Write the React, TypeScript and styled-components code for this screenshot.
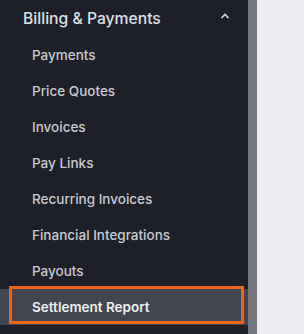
import React, { FC } from "react";
import styled, { createGlobalStyle } from "styled-components";

const GlobalStyle = createGlobalStyle`
  html, body {
    margin: 0;
    padding: 0;
    background: #eceef2;
  }
  body {
    font-family: Inter, "Liberation Sans", sans-serif;
  }
`;

const Page = styled.div`
  display: flex;
  width: 304px;
  height: 334px;
  overflow: hidden;
`;

const Sidebar = styled.nav`
  width: 248px;
  background: #1e2029;
  display: flex;
  flex-direction: column;
`;

const Divider = styled.div`
  width: 9px;
  background: #74767b;
`;

const Content = styled.div`
  flex: 1;
  background: #eceef2;
`;

const SectionHeader = styled.div`
  height: 37px;
  display: flex;
  align-items: center;
  justify-content: space-between;
  padding: 0 18px 0 23px;
  color: #dde0e6;
  font-size: 15.7px;
  font-weight: 500;
`;

const Chevron = styled.svg`
  width: 10px;
  height: 10px;
  margin-top: -6px;
`;

const ItemList = styled.ul`
  list-style: none;
  margin: 0;
  padding: 0;
`;

const Item = styled.li<{ active?: boolean }>`
  position: relative;
  height: 36px;
  display: flex;
  align-items: center;
  padding-left: 32px;
  font-size: 13.5px;
  font-weight: ${({ active }) => (active ? 600 : 500)};
  color: ${({ active }) => (active ? "#eef0f3" : "#c8cad0")};
  background: ${({ active }) => (active ? "#43464e" : "transparent")};
`;

const Outline = styled.span`
  position: absolute;
  left: 9px;
  right: 4px;
  top: -3px;
  bottom: 1px;
  border: 3px solid #ee6419;
  pointer-events: none;
`;

const items = [
  "Payments",
  "Price Quotes",
  "Invoices",
  "Pay Links",
  "Recurring Invoices",
  "Financial Integrations",
  "Payouts",
  "Settlement Report",
];

const App: FC = () => {
  return (
    <>
      <GlobalStyle />
      <Page>
        <Sidebar>
          <SectionHeader>
            <span>Billing &amp; Payments</span>
            <Chevron viewBox="0 0 10 10">
              <path
                d="M1.5 7 L5 3.5 L8.5 7"
                fill="none"
                stroke="#d6d9df"
                strokeWidth="1.6"
              />
            </Chevron>
          </SectionHeader>
          <ItemList>
            {items.map((label) => {
              const active = label === "Settlement Report";
              return (
                <Item key={label} active={active}>
                  {label}
                  {active && <Outline />}
                </Item>
              );
            })}
          </ItemList>
        </Sidebar>
        <Divider />
        <Content />
      </Page>
    </>
  );
};

export default App;
